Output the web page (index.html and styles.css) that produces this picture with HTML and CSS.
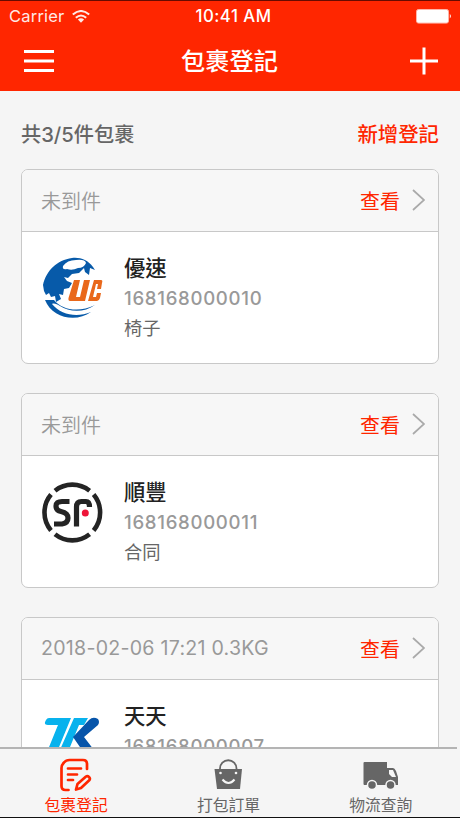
FILE: index.html
```
<!DOCTYPE html>
<html lang="zh-Hant">
<head>
<meta charset="utf-8">
<title>包裹登記</title>
<link rel="stylesheet" href="styles.css">
</head>
<body>
<div class="app">
  <header class="header">
    <div class="status">
      <div class="carrier"><span>Carrier</span>
        <svg width="18" height="13" viewBox="0 0 18 13" fill="none" stroke="#fff" stroke-width="2"><path d="M.8 4.6Q9-2.6 17.2 4.6M3.8 7.7Q9 3.2 14.2 7.7"/><path d="M5.9 9.5Q9 7 12.1 9.5L9 12.8Z" fill="#fff" stroke="none"/></svg>
      </div>
      <div class="clock">10:41 AM</div>
      <svg class="battery" width="36" height="15" viewBox="0 0 36 15"><rect x=".5" y=".5" width="32" height="13.6" rx="2" fill="#fff" stroke="#ffb5a8"/><path d="M33.8 5Q36 7.2 33.8 9.5Z" fill="#fff"/></svg>
    </div>
    <div class="nav">
      <svg width="32" height="28" viewBox="0 0 32 28" stroke="#fff" stroke-width="3"><path d="M1 4.500h30M1 14h30M1 23.500h30"/></svg>
      <h1>包裹登記</h1>
      <svg width="28" height="28" viewBox="0 0 28 28" stroke="#fff" stroke-width="3"><path d="M0 14h28M14 .5v27"/></svg>
    </div>
  </header>
  <main class="content">
    <div class="summary"><span class="count">共3/5件包裹</span><span class="add">新增登記</span></div>

    <article class="card">
      <div class="card-head"><span>未到件</span><div class="view">查看<svg width="14" height="22" viewBox="0 0 14 22" fill="none" stroke="#aaa" stroke-width="1.7"><path d="M1 1l11 10L1 21"/></svg></div></div>
      <div class="card-body">
        <svg class="logo" viewBox="0 0 64 64">
          <path d="M2 29C5 15 16 4 31 2c8-1 16 2 21 9l2 3-5-2-1 7-4-3-1-4-5 5-7 1-4 4-4-1 3 4 5 2-3 5-5 1-1 6-4-1 2 5-5 3-1-6-4 1-2-4-3 2-2-4Z" fill="#075aa9"/>
          <path d="M22 10q4-6 13-6 9-1 10 3-2 5-8 5-6 3-11 1-5 1-4-3Z" fill="#fff"/>
          <path d="M4 44h9c8 10 25 13 41 5-11 8-26 7-35 1-3-2-6-3-8-2 9 11 25 14 39 8C35 67 11 62 4 44Z" fill="#075aa9"/>
          <path d="M33 24h6l-4 17h4l4-17h6l-5 21H29q-2 0-1.500-3ZM53 24h7q2 0 1 3l-1 6h-4l1-5h-2l-3 13h3l1-4h4l-1 5q-1 3-3 3h-9Z" fill="#e9681b"/>
        </svg>
        <div class="details"><h2>優速</h2><p class="number">168168000010</p><p class="item">椅子</p></div>
      </div>
    </article>

    <article class="card">
      <div class="card-head"><span>未到件</span><div class="view">查看<svg width="14" height="22" viewBox="0 0 14 22" fill="none" stroke="#aaa" stroke-width="1.7"><path d="M1 1l11 10L1 21"/></svg></div></div>
      <div class="card-body">
        <svg class="logo" viewBox="0 0 64 64" fill="none" stroke="#242424">
          <path d="M14 10.700A27.800 27.800 0 0 1 48.600 10.700M52.600 14.600A27.800 27.800 0 0 1 52.600 50.400M48.600 54.300A27.800 27.800 0 0 1 14 54.300M10 50.400A27.800 27.800 0 0 1 10 14.600" stroke-width="4.600"/>
          <path d="M28.500 21.500H21Q15 21.500 15 26T20 31.500Q27 33 27 38T21 44H13" stroke-width="5.200"/>
          <path d="M35.500 46.500V27Q35.500 21.500 40.500 21.500H45Q48.500 21.500 48.500 27" stroke-width="5.200"/><circle cx="44.300" cy="33" r="3.500" fill="#ee1539" stroke="none"/>
        </svg>
        <div class="details"><h2>順豐</h2><p class="number">168168000011</p><p class="item">合同</p></div>
      </div>
    </article>

    <article class="card">
      <div class="card-head"><span class="date">2018-02-06 17:21 0.3KG</span><div class="view">查看<svg width="14" height="22" viewBox="0 0 14 22" fill="none" stroke="#aaa" stroke-width="1.7"><path d="M1 1l11 10L1 21"/></svg></div></div>
      <div class="card-body">
        <svg class="logo" viewBox="0 0 64 64">
          <path d="M8 14H30L16 48H6L17 21H7Q2 21 5 16Q6 14 8 14ZM33 14H47L43 21H38L27 48H18Z" fill="#08b2ed"/>
          <path d="M48 16Q52 12 57 15Q59 18 57 21L43 33L53 46H41L32 33Z" fill="#0755aa"/>
        </svg>
        <div class="details"><h2>天天</h2><p class="number">168168000007</p></div>
      </div>
    </article>
  </main>
  <nav class="tabs">
    <div class="tab active">
      <svg width="34" height="36" viewBox="0 0 34 36" fill="none" stroke="currentColor" stroke-width="2.700" stroke-linecap="round" stroke-linejoin="round"><path d="M28 12V7q0-4-4-4H10.500Q7 3 5 5.500Q2.500 8 2.500 11v18q0 4 4 4h3M9 11.500h13M9 17.500h9M9 23h5"/><path d="M17 32.500l1.500-5.500 8.500-7.500q1.500-1 3 .5t.5 3L22 31Z"/></svg>
      <span>包裹登記</span>
    </div>
    <div class="tab">
      <svg width="34" height="36" viewBox="0 0 34 36" fill="none"><path d="M3.500 12h27.500L29 32H6Z" fill="#666"/><path d="M9 15V11.500a8 8 0 0 1 16.500 0v3.500" stroke="#666" stroke-width="1.800"/><path d="M11.500 22.500q6 7 12 0" stroke="#f5f5f5" stroke-width="2"/><circle cx="9.500" cy="16" r="1.300" fill="#f5f5f5"/><circle cx="25" cy="16" r="1.300" fill="#f5f5f5"/></svg>
      <span>打包訂單</span>
    </div>
    <div class="tab">
      <svg width="38" height="36" viewBox="0 0 38 36" fill="#666"><path d="M2.500 5H25V11H31Q32.500 11 34 14L36 20V28H2.500Q1.500 28 1.500 27V6Q1.500 5 2.500 5Z"/><path d="M27 13h4l3 7H30l-3-3Z" fill="#f5f5f5"/><circle cx="10" cy="28" r="4.500" stroke="#f5f5f5" stroke-width="1.500"/><circle cx="28.500" cy="28" r="4.500" stroke="#f5f5f5" stroke-width="1.500"/></svg>
      <span>物流查詢</span>
    </div>
  </nav>
</div>
</body>
</html>
```
FILE: styles.css
```
* { box-sizing: border-box; }
body { margin: 0; font-family: Inter, "Noto Sans CJK TC", sans-serif; }
h1, h2, p { margin: 0; }
svg { display: block; flex: none; }
.app { height: 818px; width: 460px; display: flex; flex-direction: column; overflow: hidden; background: #f5f5f5; border-top: 1px solid #670b00; border-bottom: 1px solid #111; }
.header { height: 90px; flex: none; background: #ff2600; color: #fff; }
.status { height: 30px; display: grid; grid-template-columns: 1fr auto 1fr; align-items: center; padding: 0 8px 0 9px; font-size: 16px; }
.carrier { display: flex; gap: 8px; align-items: center; font-size: 16.5px; letter-spacing: .2px; opacity: .9; }
.clock { font-weight: 500; font-size: 16.8px; letter-spacing: .5px; padding-left: 6px; }
.battery { justify-self: end; }
.nav { height: 60px; display: flex; align-items: center; justify-content: space-between; padding: 0 22px 0 24px; }
.nav svg:first-child { margin-left: -1px; }
.nav h1 { font-size: 24.2px; line-height: 36px; font-weight: 500; padding: 2px 6px 0 0; }
.content { flex: 1; min-height: 0; overflow: hidden; padding: 0 21px; }
.summary { height: 78px; display: flex; justify-content: space-between; align-items: center; font-size: 20px; padding-top: 6px; }
.count { font-weight: 500; color: #666; font-size: 20.2px; }
.add { color: #ff2600; font-weight: 500; font-size: 20.4px; }
.card { height: 195px; margin-bottom: 29px; border: 1px solid #c8c8c8; border-radius: 7px; overflow: hidden; background: #fff; }
.card-head { height: 62px; border-bottom: 1px solid #c8c8c8; background: #f7f7f7; color: #999; display: flex; justify-content: space-between; align-items: center; font-size: 20px; font-weight: 350; padding: 0 12px 1px 19px; }
.date { font-weight: 400; font-size: 19.6px; letter-spacing: .25px; }
.view { color: #ff2600; font-weight: 400; display: flex; align-items: center; gap: 12px; }
.card-body { display: flex; padding: 20px; gap: 19px; }
.logo { width: 64px; height: 64px; margin: 4px 0 0 -1px; }
.details { white-space: nowrap; }
.details h2 { font-size: 21.3px; line-height: 32px; font-weight: 500; color: #222; }
.number { font-size: 18.6px; line-height: 29px; letter-spacing: .7px; color: #999; font-weight: 500; }
.item { font-size: 18.3px; line-height: 31px; color: #666; font-weight: 400; }
.tabs { height: 70px; width: 457px; flex: none; display: grid; grid-template-columns: repeat(3, 1fr); border-top: 2px solid #b4b4b4; color: #666; }
.tab { display: flex; flex-direction: column; align-items: center; padding-top: 8px; font-size: 15.8px; line-height: 26px; }
.tab span { margin-top: 0; }
.active { color: #ff2600; }
```
